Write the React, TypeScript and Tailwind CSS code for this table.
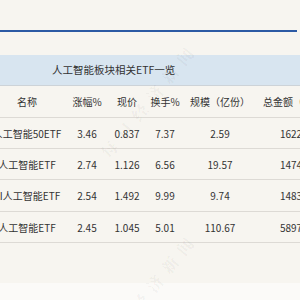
const columns = [
  { label: "名称", width: "w-[80px]" },
  { label: "涨幅%", width: "w-[40px]" },
  { label: "现价", width: "w-[40px]" },
  { label: "换手%", width: "w-[36px]" },
  { label: "规模（亿份）", width: "w-[74px]" },
  { label: "总金额（亿元）", width: "w-[82px]" },
];

interface EtfRow {
  name: string;
  change: string;
  price: string;
  turnover: string;
  scale: string;
  amount: string;
  height: string;
}

const rows: EtfRow[] = [
  { name: "人工智能50ETF", change: "3.46", price: "0.837", turnover: "7.37", scale: "2.59", amount: "16224.5", height: "h-[31px]" },
  { name: "人工智能ETF", change: "2.74", price: "1.126", turnover: "6.56", scale: "19.57", amount: "14746.2", height: "h-[31px]" },
  { name: "AI人工智能ETF", change: "2.54", price: "1.492", turnover: "9.99", scale: "9.74", amount: "14833.8", height: "h-[32px]" },
  { name: "人工智能ETF", change: "2.45", price: "1.045", turnover: "5.01", scale: "110.67", amount: "58973.1", height: "h-[31px]" },
];

function Watermark({ className }: { className: string }) {
  return (
    <div
      className={`pointer-events-none absolute -rotate-[51deg] font-['Noto_Serif_CJK_SC','Noto_Sans_CJK_SC',serif] text-[16px] font-bold tracking-[8px] whitespace-nowrap text-black/[0.05] ${className}`}
    >
      每日经济新闻
    </div>
  );
}

export default function App() {
  return (
    <div className="relative flex h-[300px] w-[300px] flex-col overflow-hidden bg-[#f7f5f0] font-['Noto_Sans_CJK_SC',sans-serif] text-[10px] text-[#333]">
      <div className="h-[30px] shrink-0" />
      <div className="h-[2px] w-[297px] shrink-0 bg-[#2c5aa4]" />
      <div className="h-[23px] shrink-0" />

      <div className="flex h-[31px] shrink-0 items-center border-b border-[#cdd3d8] bg-[#d8e5f0] pl-[52px] text-[10.5px]">
        人工智能板块相关ETF一览
      </div>

      <div className="-ml-[13px] flex h-[32px] shrink-0 items-center border-b border-[#dddad5]">
        {columns.map((col) => (
          <div key={col.label} className={`${col.width} shrink-0 text-center whitespace-nowrap`}>
            {col.label}
          </div>
        ))}
      </div>

      {rows.map((row, i) => (
        <div key={i} className={`-ml-[13px] flex ${row.height} shrink-0 items-center border-b border-[#dddad5]`}>
          <div className="w-[80px] shrink-0 text-center whitespace-nowrap">{row.name}</div>
          <div className="w-[40px] shrink-0 text-center">{row.change}</div>
          <div className="w-[40px] shrink-0 text-center">{row.price}</div>
          <div className="w-[36px] shrink-0 text-center">{row.turnover}</div>
          <div className="w-[74px] shrink-0 text-center">{row.scale}</div>
          <div className="w-[82px] shrink-0 text-center">{row.amount}</div>
        </div>
      ))}

      <div className="flex-1" />
      <div className="h-[17px] shrink-0 bg-[#fbfaf8]" />

      <Watermark className="left-[78px] top-[88px]" />
      <Watermark className="left-[78px] top-[278px]" />
    </div>
  );
}
